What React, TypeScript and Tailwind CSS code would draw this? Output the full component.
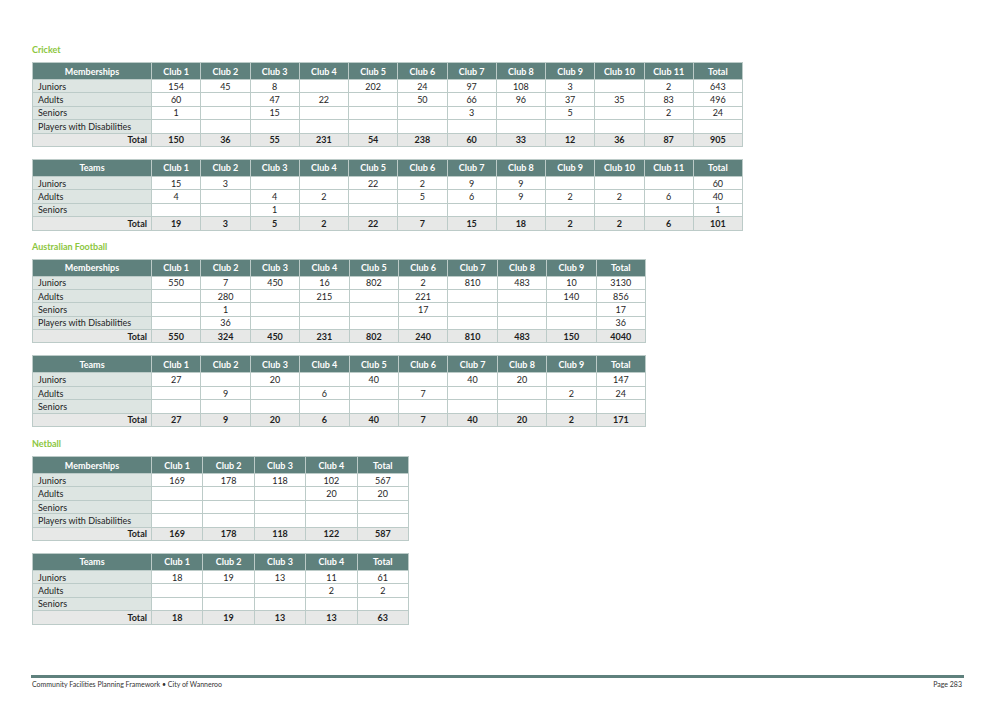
import React from "react";

type Row = { label: string; values: (string | number)[] };
type TableProps = {
  head: string;
  cols: string[];
  rows: Row[];
  total: (string | number)[];
  width: string;
  gridCols: string;
};

const BORDER = "border-[#bccbc8]";

function DataTable({ head, cols, rows, total, width, gridCols }: TableProps) {
  return (
    <div className={`${width} border-t border-l ${BORDER}`}>
      <div className={`grid ${gridCols} h-[17px] bg-[#5f817d] text-white font-bold`}>
        <div className={`flex items-center justify-center border-r border-b ${BORDER}`}>{head}</div>
        {cols.map((c) => (
          <div key={c} className={`flex items-center justify-center border-r border-b ${BORDER}`}>
            {c}
          </div>
        ))}
      </div>
      {rows.map((r) => (
        <div key={r.label} className={`grid ${gridCols} h-[13.4px]`}>
          <div className={`flex items-center pl-[5px] bg-[#dde5e2] border-r border-b ${BORDER}`}>{r.label}</div>
          {r.values.map((v, i) => (
            <div key={i} className={`flex items-center justify-center bg-white border-r border-b ${BORDER}`}>
              {v}
            </div>
          ))}
        </div>
      ))}
      <div className={`grid ${gridCols} h-[13.4px] bg-[#e7e8e7] font-bold`}>
        <div className={`flex items-center justify-end pr-[4px] border-r border-b ${BORDER}`}>Total</div>
        {total.map((v, i) => (
          <div key={i} className={`flex items-center justify-center border-r border-b ${BORDER}`}>
            {v}
          </div>
        ))}
      </div>
    </div>
  );
}

const clubs = (n: number) => [...Array.from({ length: n }, (_, i) => `Club ${i + 1}`), "Total"];
const e = "";

function Title({ children }: { children: React.ReactNode }) {
  return <div className="h-[12px] leading-[12px] text-[9px] font-bold text-[#8cc63e] mb-[6px]">{children}</div>;
}

export default function App() {
  const c12 = "grid-cols-[119px_repeat(12,1fr)]";
  const c10 = "grid-cols-[119px_repeat(10,1fr)]";
  const c5 = "grid-cols-[119px_repeat(5,1fr)]";
  return (
    <div
      className="w-[1007px] h-[701px] bg-white relative text-[9px] leading-none text-[#1e1e1e]"
      style={{ fontFamily: "Lato, 'Open Sans', sans-serif" }}
    >
      <div className="pl-[32px] pt-[44px] flex flex-col">
        <Title>Cricket</Title>
        <DataTable
          head="Memberships"
          cols={clubs(11)}
          width="w-[711px]"
          gridCols={c12}
          rows={[
            { label: "Juniors", values: [154, 45, 8, e, 202, 24, 97, 108, 3, e, 2, 643] },
            { label: "Adults", values: [60, e, 47, 22, e, 50, 66, 96, 37, 35, 83, 496] },
            { label: "Seniors", values: [1, e, 15, e, e, e, 3, e, 5, e, 2, 24] },
            { label: "Players with Disabilities", values: [e, e, e, e, e, e, e, e, e, e, e, e] },
          ]}
          total={[150, 36, 55, 231, 54, 238, 60, 33, 12, 36, 87, 905]}
        />
        <div className="h-[12px]" />
        <DataTable
          head="Teams"
          cols={clubs(11)}
          width="w-[711px]"
          gridCols={c12}
          rows={[
            { label: "Juniors", values: [15, 3, e, e, 22, 2, 9, 9, e, e, e, 60] },
            { label: "Adults", values: [4, e, 4, 2, e, 5, 6, 9, 2, 2, 6, 40] },
            { label: "Seniors", values: [e, e, 1, e, e, e, e, e, e, e, e, 1] },
          ]}
          total={[19, 3, 5, 2, 22, 7, 15, 18, 2, 2, 6, 101]}
        />
        <div className="h-[10px]" />
        <Title>Australian Football</Title>
        <DataTable
          head="Memberships"
          cols={clubs(9)}
          width="w-[614px]"
          gridCols={c10}
          rows={[
            { label: "Juniors", values: [550, 7, 450, 16, 802, 2, 810, 483, 10, 3130] },
            { label: "Adults", values: [e, 280, e, 215, e, 221, e, e, 140, 856] },
            { label: "Seniors", values: [e, 1, e, e, e, 17, e, e, e, 17] },
            { label: "Players with Disabilities", values: [e, 36, e, e, e, e, e, e, e, 36] },
          ]}
          total={[550, 324, 450, 231, 802, 240, 810, 483, 150, 4040]}
        />
        <div className="h-[12px]" />
        <DataTable
          head="Teams"
          cols={clubs(9)}
          width="w-[614px]"
          gridCols={c10}
          rows={[
            { label: "Juniors", values: [27, e, 20, e, 40, e, 40, 20, e, 147] },
            { label: "Adults", values: [e, 9, e, 6, e, 7, e, e, 2, 24] },
            { label: "Seniors", values: [e, e, e, e, e, e, e, e, e, e] },
          ]}
          total={[27, 9, 20, 6, 40, 7, 40, 20, 2, 171]}
        />
        <div className="h-[11px]" />
        <Title>Netball</Title>
        <DataTable
          head="Memberships"
          cols={clubs(4)}
          width="w-[377px]"
          gridCols={c5}
          rows={[
            { label: "Juniors", values: [169, 178, 118, 102, 567] },
            { label: "Adults", values: [e, e, e, 20, 20] },
            { label: "Seniors", values: [e, e, e, e, e] },
            { label: "Players with Disabilities", values: [e, e, e, e, e] },
          ]}
          total={[169, 178, 118, 122, 587]}
        />
        <div className="h-[12px]" />
        <DataTable
          head="Teams"
          cols={clubs(4)}
          width="w-[377px]"
          gridCols={c5}
          rows={[
            { label: "Juniors", values: [18, 19, 13, 11, 61] },
            { label: "Adults", values: [e, e, e, 2, 2] },
            { label: "Seniors", values: [e, e, e, e, e] },
          ]}
          total={[18, 19, 13, 13, 63]}
        />
      </div>
      <div className="absolute left-[31px] top-[675px] w-[933px]">
        <div className="h-[3px] bg-[#5f817d]" />
        <div className="flex justify-between items-center mt-[2px] text-[7px] leading-[9px] text-[#333] pr-[2px] pl-[1px]">
          <span>Community Facilities Planning Framework • City of Wanneroo</span>
          <span>Page 283</span>
        </div>
      </div>
    </div>
  );
}
